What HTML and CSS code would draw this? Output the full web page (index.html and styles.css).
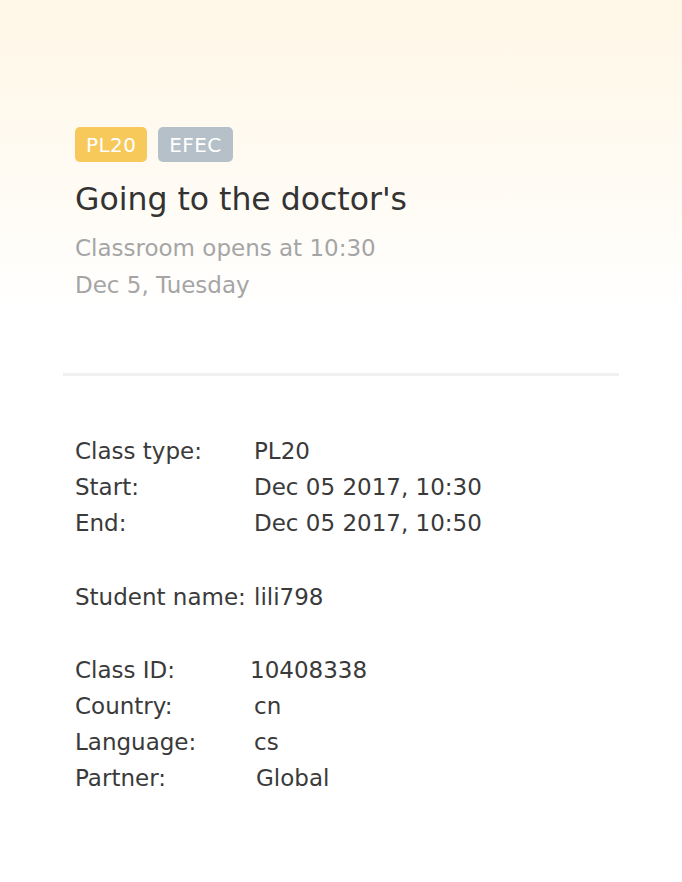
FILE: index.html
```html
<!DOCTYPE html>
<html>
<head>
<meta charset="utf-8">
<link rel="stylesheet" href="styles.css">
</head>
<body>
<div class="page">
  <header class="hero">
    <div class="tags">
      <span class="tag tag-yellow">PL20</span>
      <span class="tag tag-grey">EFEC</span>
    </div>
    <h1 class="title">Going to the doctor's</h1>
    <p class="sub">Classroom opens at 10:30</p>
    <p class="sub">Dec 5, Tuesday</p>
  </header>
  <hr class="divider">
  <section class="details">
    <div class="group">
      <div class="row"><span class="label">Class type:</span><span class="value">PL20</span></div>
      <div class="row"><span class="label">Start:</span><span class="value">Dec 05 2017, 10:30</span></div>
      <div class="row"><span class="label">End:</span><span class="value">Dec 05 2017, 10:50</span></div>
    </div>
    <div class="group">
      <div class="row"><span class="label">Student name:</span><span class="value">lili798</span></div>
    </div>
    <div class="group">
      <div class="row"><span class="label">Class ID:</span><span class="value value-shift">10408338</span></div>
      <div class="row"><span class="label">Country:</span><span class="value">cn</span></div>
      <div class="row"><span class="label">Language:</span><span class="value">cs</span></div>
      <div class="row"><span class="label">Partner:</span><span class="value value-right">Global</span></div>
    </div>
  </section>
</div>
</body>
</html>
```

FILE: styles.css
```css
html, body {
  margin: 0;
  padding: 0;
  background: #ffffff;
}
body {
  font-family: "DejaVu Sans", "Open Sans", sans-serif;
  color: #3a3a3a;
  width: 682px;
  height: 882px;
  overflow: hidden;
}
.page {
  display: flex;
  flex-direction: column;
}
.hero {
  background: linear-gradient(to bottom, #fff7e7 0%, #fffaf0 45%, #ffffff 100%);
  padding: 127px 75px 0;
  height: 313px;
  box-sizing: border-box;
}
.tags {
  display: flex;
  gap: 11px;
}
.tag {
  display: inline-flex;
  align-items: center;
  height: 35px;
  padding: 0 11px;
  border-radius: 5px;
  color: #ffffff;
  font-size: 20px;
  letter-spacing: 0.4px;
}
.tag-yellow { background: #f7c95b; }
.tag-grey { background: #b6c0c8; }
.title {
  margin: 19px 0 0;
  font-size: 31.5px;
  font-weight: 400;
  color: #333333;
  line-height: 36px;
}
.sub {
  margin: 0;
  font-size: 23px;
  line-height: 37px;
  color: #a5a5a5;
}
.sub:first-of-type { margin-top: 13px; }
.divider {
  border: 0;
  height: 3px;
  background: #eef0f2;
  margin: 60px 63px 0 63px;
}
.details {
  padding: 57px 75px 0;
  display: flex;
  flex-direction: column;
  gap: 37.5px;
}
.row {
  display: grid;
  grid-template-columns: 179px 1fr;
  font-size: 23px;
  line-height: 36px;
  color: #3a3a3a;
}
.value-shift { margin-left: -4px; }
.value-right { margin-left: 2px; }
```
